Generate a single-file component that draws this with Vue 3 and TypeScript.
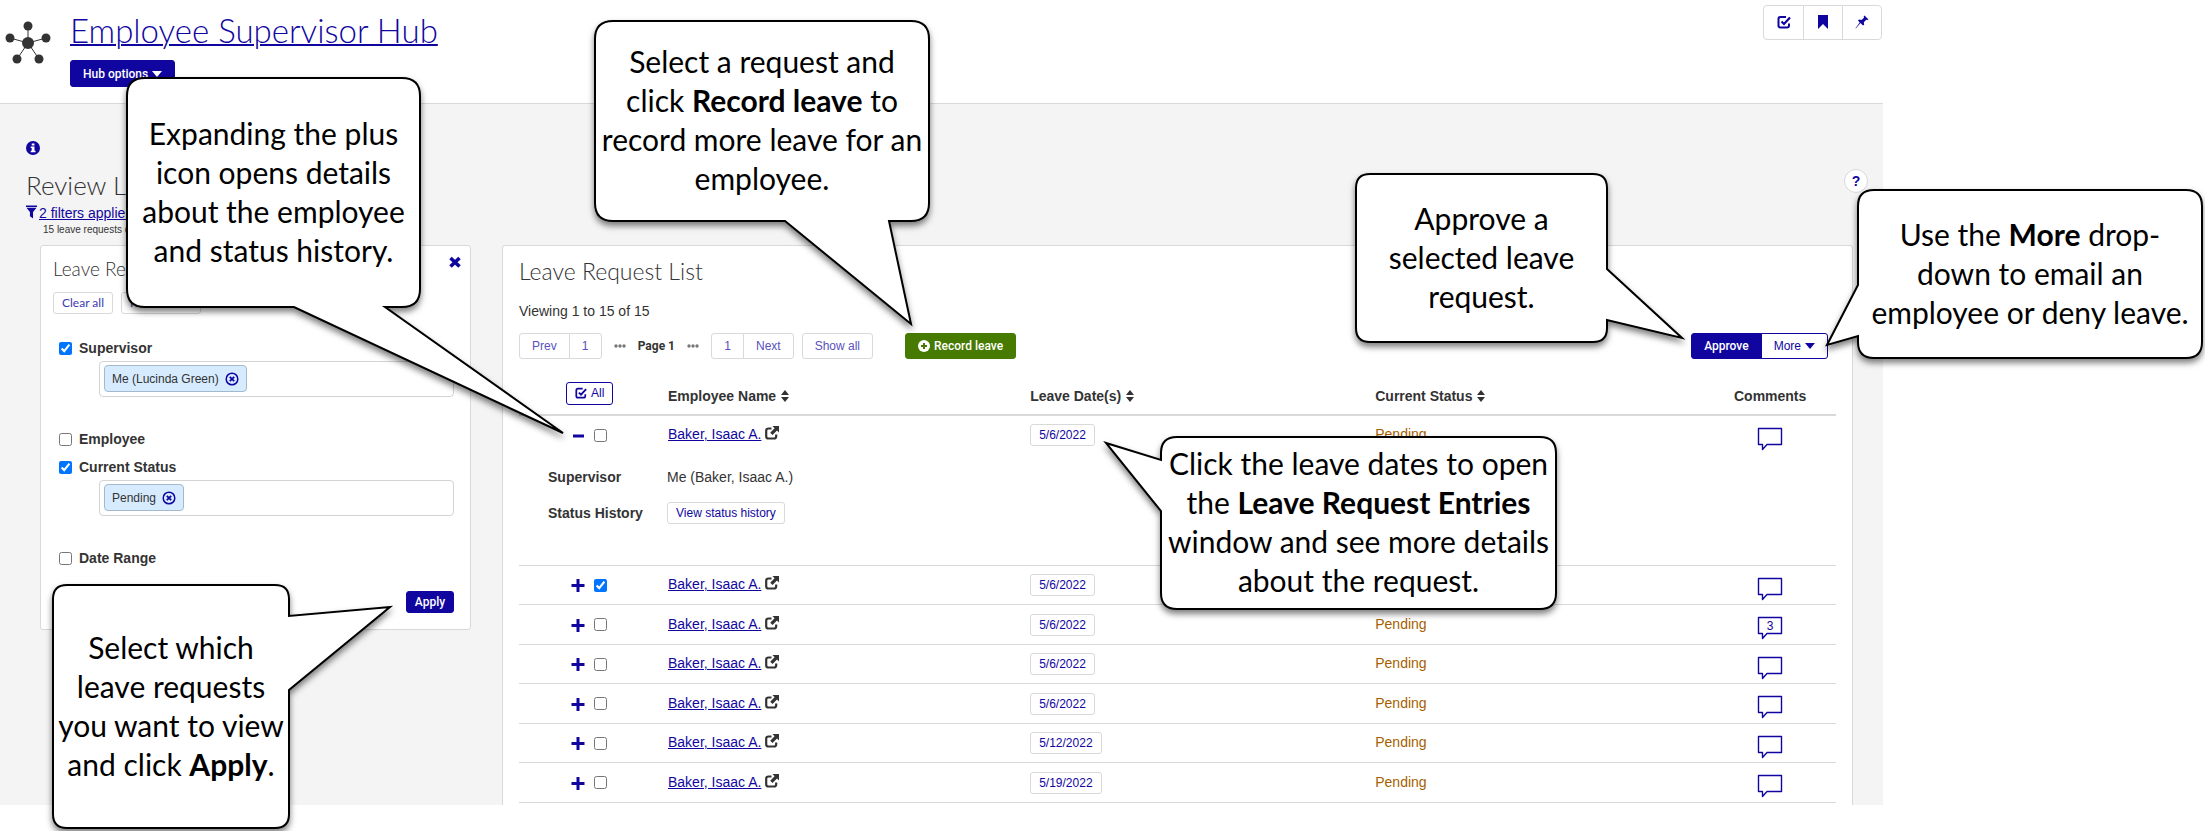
<script setup lang="ts">
import { ref } from 'vue'

interface LeaveRequest {
  id: number
  name: string
  date: string
  status: string
  comments: string
  selected: boolean
  expanded: boolean
}

interface Segment {
  text: string
  bold?: boolean
}

interface Point {
  x: number
  y: number
}

interface Callout {
  id: string
  left: number
  top: number
  width: number
  height: number
  radius: number
  side: 'bottom' | 'left' | 'right'
  from: number
  to: number
  tip: Point
  lines: Segment[][]
}

const dates = ['5/6/2022', '5/6/2022', '5/6/2022', '5/6/2022', '5/6/2022', '5/12/2022', '5/19/2022']

const requests = ref<LeaveRequest[]>(
  dates.map((date, i) => ({
    id: i,
    name: 'Baker, Isaac A.',
    date,
    status: 'Pending',
    comments: i === 2 ? '3' : '',
    selected: i === 1,
    expanded: i === 0,
  })),
)

const supervisorOn = ref(true)
const employeeOn = ref(false)
const statusOn = ref(true)
const dateRangeOn = ref(false)

const columns = ['Employee Name', 'Leave Date(s)', 'Current Status']

// Tail anchors and tips are relative to the callout box's own top left corner.
const callouts: Callout[] = [
  {
    id: 'expand', left: 127, top: 78, width: 293, height: 229, radius: 18,
    side: 'bottom', from: 167, to: 258, tip: { x: 436, y: 355 },
    lines: [
      [{ text: 'Expanding the plus' }],
      [{ text: 'icon opens details' }],
      [{ text: 'about the employee' }],
      [{ text: 'and status history.' }],
    ],
  },
  {
    id: 'record', left: 595, top: 21, width: 334, height: 200, radius: 18,
    side: 'bottom', from: 190, to: 294, tip: { x: 316, y: 303 },
    lines: [
      [{ text: 'Select a request and' }],
      [{ text: 'click ' }, { text: 'Record leave', bold: true }, { text: ' to' }],
      [{ text: 'record more leave for an' }],
      [{ text: 'employee.' }],
    ],
  },
  {
    id: 'approve', left: 1356, top: 174, width: 251, height: 168, radius: 14,
    side: 'right', from: 95, to: 146, tip: { x: 326, y: 164 },
    lines: [
      [{ text: 'Approve a' }],
      [{ text: 'selected leave' }],
      [{ text: 'request.' }],
    ],
  },
  {
    id: 'more', left: 1858, top: 190, width: 344, height: 168, radius: 16,
    side: 'left', from: 95, to: 146, tip: { x: -31, y: 155 },
    lines: [
      [{ text: 'Use the ' }, { text: 'More', bold: true }, { text: ' drop-' }],
      [{ text: 'down to email an' }],
      [{ text: 'employee or deny leave.' }],
    ],
  },
  {
    id: 'dates', left: 1161, top: 437, width: 395, height: 172, radius: 16,
    side: 'left', from: 23, to: 74, tip: { x: -55, y: 6 },
    lines: [
      [{ text: 'Click the leave dates to open' }],
      [{ text: 'the ' }, { text: 'Leave Request Entries', bold: true }],
      [{ text: 'window and see more details' }],
      [{ text: 'about the request.' }],
    ],
  },
  {
    id: 'apply', left: 53, top: 585, width: 236, height: 243, radius: 14,
    side: 'right', from: 31, to: 105, tip: { x: 337, y: 22 },
    lines: [
      [{ text: 'Select which' }],
      [{ text: 'leave requests' }],
      [{ text: 'you want to view' }],
      [{ text: 'and click ' }, { text: 'Apply', bold: true }, { text: '.' }],
    ],
  },
]

function outline(c: Callout): string {
  const { width: w, height: h, radius: r, tip } = c
  const right = c.side === 'right' ? `V${c.from} L${tip.x} ${tip.y} L${w} ${c.to}` : ''
  const bottom = c.side === 'bottom' ? `H${c.to} L${tip.x} ${tip.y} L${c.from} ${h}` : ''
  const left = c.side === 'left' ? `V${c.to} L${tip.x} ${tip.y} L0 ${c.from}` : ''
  return [
    `M${r} 0 H${w - r} Q${w} 0 ${w} ${r}`, right,
    `V${h - r} Q${w} ${h} ${w - r} ${h}`, bottom,
    `H${r} Q0 ${h} 0 ${h - r}`, left,
    `V${r} Q0 0 ${r} 0 Z`,
  ].join(' ')
}

function box(c: Callout) {
  return { left: `${c.left}px`, top: `${c.top}px`, width: `${c.width}px`, height: `${c.height}px` }
}
</script>

<template>
  <div class="screen">
    <div class="page">
      <header class="hub-header">
        <svg class="hub-logo" viewBox="0 0 46 44" aria-hidden="true">
          <path d="M23 22V5M23 22L5 17M23 22l18-5M23 22L12 38M23 22l11 16" stroke="#333" />
          <g fill="#333">
            <circle cx="23" cy="22" r="6" />
            <circle cx="23" cy="5" r="4.5" />
            <circle cx="5" cy="17" r="4.5" />
            <circle cx="41" cy="17" r="4.5" />
            <circle cx="12" cy="38" r="4.5" />
            <circle cx="34" cy="38" r="4.5" />
          </g>
        </svg>
        <div class="hub-main">
          <h1><a href="#hub">Employee Supervisor Hub</a></h1>
          <button type="button" class="btn solid hub-options">
            Hub options
            <svg class="caret" viewBox="0 0 10 6"><path d="M0 0h10L5 6z" /></svg>
          </button>
        </div>
        <div class="tools">
          <button type="button" aria-label="Tasks">
            <svg viewBox="0 0 14 14">
              <path d="M9 2H3.500Q1.500 2 1.500 4v6.500q0 2 2 2H10q2 0 2-2V8.500" fill="none" stroke="currentColor" stroke-width="2" />
              <path d="M4.500 6.500L7 9l6-6.500" fill="none" stroke="currentColor" stroke-width="2.200" />
            </svg>
          </button>
          <button type="button" aria-label="Bookmark">
            <svg viewBox="0 0 14 14"><path d="M2 0h10v14L7 9l-5 5z" fill="currentColor" /></svg>
          </button>
          <button type="button" aria-label="Pin">
            <svg viewBox="0 0 14 14">
              <path d="M9.500 0.500l4 4-1.200.6-1-.3-2.500 2.500.4 2.500-1.200.8-2.500-2.600L.8 13.400l-.3-.2L4.700 7.500 3 5.600l1-1 2.500.3L9 2.700 8.700 1.500z" fill="currentColor" />
            </svg>
          </button>
        </div>
      </header>

      <main class="workspace">
        <div class="info-row">
          <svg class="info" viewBox="0 0 14 14" aria-hidden="true">
            <circle cx="7" cy="7" r="7" fill="#10069f" />
            <path d="M5.700 2.500h2.800v2H5.700zM4.700 5.500h3.800v4.200h1v1.600H4.700V9.700h1V7.100h-1z" fill="#fff" />
          </svg>
          <button type="button" class="help" aria-label="Help">?</button>
        </div>
        <h2>Review Leave</h2>
        <p class="filters-line">
          <svg class="funnel" viewBox="0 0 12 14" aria-hidden="true">
            <path d="M0 0h12v1.600H0zM0.500 2.400h11L7.700 7v7L4.300 11.500V7z" fill="#10069f" />
          </svg>
          <a href="#filters">2 filters applied</a>
        </p>
        <p class="count">15 leave requests displayed</p>

        <div class="columns">
          <section class="panel filter">
            <div class="filter-head">
              <h3>Leave Request Filter</h3>
              <button type="button" class="close" aria-label="Close">
                <svg viewBox="0 0 12 12"><path d="M1.500 2l9 8.500M10.500 2l-9 8.500" stroke="currentColor" stroke-width="3.600" /></svg>
              </button>
            </div>
            <div class="filter-actions">
              <button type="button" class="btn light">Clear all</button>
              <button type="button" class="btn light">Reset filters</button>
            </div>
            <label class="check"><input v-model="supervisorOn" type="checkbox">Supervisor</label>
            <div class="tokens">
              <span class="token">Me (Lucinda Green)
                <button type="button" aria-label="Remove supervisor">
                  <svg viewBox="0 0 14 14"><circle cx="7" cy="7" r="5.800" fill="none" stroke="currentColor" stroke-width="1.500" /><path d="M4.800 4.800l4.400 4.400M9.200 4.800L4.800 9.200" stroke="currentColor" stroke-width="1.800" /></svg>
                </button>
              </span>
            </div>
            <label class="check"><input v-model="employeeOn" type="checkbox">Employee</label>
            <label class="check second"><input v-model="statusOn" type="checkbox">Current Status</label>
            <div class="tokens">
              <span class="token">Pending
                <button type="button" aria-label="Remove status">
                  <svg viewBox="0 0 14 14"><circle cx="7" cy="7" r="5.800" fill="none" stroke="currentColor" stroke-width="1.500" /><path d="M4.800 4.800l4.400 4.400M9.200 4.800L4.800 9.200" stroke="currentColor" stroke-width="1.800" /></svg>
                </button>
              </span>
            </div>
            <label class="check"><input v-model="dateRangeOn" type="checkbox">Date Range</label>
            <div class="apply-row"><button type="button" class="btn solid small">Apply</button></div>
          </section>

          <section class="panel list">
            <h3>Leave Request List</h3>
            <p class="viewing">Viewing 1 to 15 of 15</p>
            <div class="toolbar">
              <div class="group">
                <button type="button" class="btn pale">Prev</button>
                <button type="button" class="btn pale num">1</button>
              </div>
              <svg class="dots" viewBox="0 0 12 4"><circle cx="2" cy="2" r="1.700" /><circle cx="6" cy="2" r="1.700" /><circle cx="10" cy="2" r="1.700" /></svg>
              <strong class="current">Page 1</strong>
              <svg class="dots" viewBox="0 0 12 4"><circle cx="2" cy="2" r="1.700" /><circle cx="6" cy="2" r="1.700" /><circle cx="10" cy="2" r="1.700" /></svg>
              <div class="group">
                <button type="button" class="btn pale num">1</button>
                <button type="button" class="btn pale">Next</button>
              </div>
              <button type="button" class="btn pale show-all">Show all</button>
              <button type="button" class="btn green">
                <svg class="plus-circle" viewBox="0 0 12 12"><circle cx="6" cy="6" r="6" fill="#fff" /><path d="M6 3v6M3 6h6" stroke="#467a00" stroke-width="2" /></svg>
                Record leave
              </button>
              <div class="group actions">
                <button type="button" class="btn solid">Approve</button>
                <button type="button" class="btn outline">
                  More
                  <svg class="caret" viewBox="0 0 10 6"><path d="M0 0h10L5 6z" /></svg>
                </button>
              </div>
            </div>

            <table>
              <colgroup>
                <col class="c-select"><col class="c-name"><col class="c-date"><col class="c-status"><col class="c-comments">
              </colgroup>
              <thead>
                <tr>
                  <th class="select">
                    <button type="button" class="btn outline all">
                      <svg viewBox="0 0 14 14">
                        <path d="M9 2H3.500Q1.500 2 1.500 4v6.500q0 2 2 2H10q2 0 2-2V8.500" fill="none" stroke="currentColor" stroke-width="2" />
                        <path d="M4.500 6.500L7 9l6-6.500" fill="none" stroke="currentColor" stroke-width="2.200" />
                      </svg>
                      All
                    </button>
                  </th>
                  <th v-for="column in columns" :key="column">
                    {{ column }}
                    <svg class="sort" viewBox="0 0 8 12"><path d="M0 5l4-5 4 5zM0 7h8l-4 5z" /></svg>
                  </th>
                  <th class="center">Comments</th>
                </tr>
              </thead>
              <tbody>
                <template v-for="request in requests" :key="request.id">
                  <tr :class="{ open: request.expanded }">
                    <td class="select">
                      <button type="button" class="toggle" :aria-label="request.expanded ? 'Collapse' : 'Expand'" @click="request.expanded = !request.expanded">
                        <svg viewBox="0 0 14 14">
                          <path v-if="request.expanded" d="M2 8h11" stroke="currentColor" stroke-width="3" />
                          <path v-else d="M7 1v13M0.500 7.500h13" stroke="currentColor" stroke-width="3" />
                        </svg>
                      </button>
                      <input v-model="request.selected" type="checkbox" :aria-label="`Select ${request.name} ${request.date}`">
                    </td>
                    <td class="name">
                      <a href="#employee">{{ request.name }}</a>
                      <svg class="external" viewBox="0 0 14 14">
                        <path d="M6.500 2.500H3.500Q1.200 2.500 1.200 4.800v5.400q0 2.300 2.300 2.300h5.400q2.300 0 2.300-2.300V8.500" fill="none" stroke="#333" stroke-width="2.200" />
                        <path d="M7.500 0H14v6.500l-2-2-4.500 4.500-2.300-2.300L9.600 2.200z" fill="#333" />
                      </svg>
                    </td>
                    <td><button type="button" class="btn plain">{{ request.date }}</button></td>
                    <td class="status">{{ request.status }}</td>
                    <td class="center">
                      <button type="button" class="comment" aria-label="Comments">
                        <svg viewBox="0 0 26 24"><path d="M1.500 1.500h23v16H10l-4.500 5v-5h-4z" fill="none" stroke="currentColor" stroke-width="1.400" stroke-linejoin="round" /></svg>
                        <span>{{ request.comments }}</span>
                      </button>
                    </td>
                  </tr>
                  <tr v-if="request.expanded" class="details">
                    <td colspan="5">
                      <dl>
                        <dt>Supervisor</dt><dd>Me (Baker, Isaac A.)</dd>
                        <dt>Status History</dt><dd><button type="button" class="btn plain">View status history</button></dd>
                      </dl>
                    </td>
                  </tr>
                </template>
              </tbody>
            </table>
          </section>
        </div>
      </main>
    </div>

    <aside v-for="c in callouts" :key="c.id" class="callout" :style="box(c)">
      <svg class="bubble" aria-hidden="true"><path :d="outline(c)" /></svg>
      <p>
        <span v-for="(line, i) in c.lines" :key="i" class="line">
          <template v-for="(part, j) in line" :key="j"><b v-if="part.bold">{{ part.text }}</b><template v-else>{{ part.text }}</template></template>
        </span>
      </p>
    </aside>
  </div>
</template>

<style>
body {
  margin: 0;
  background: #fff;
}
</style>

<style scoped>
* {
  box-sizing: border-box;
}
.screen {
  position: relative;
  overflow: hidden;
  padding-bottom: 26px;
  font: 14px/20px "Liberation Sans", Arial, sans-serif;
  color: #333;
}
.page {
  margin-right: 322px;
}
h1, h2, h3, p, dl, dd {
  margin: 0;
}
h1, h2, h3 {
  font-family: Lato, sans-serif;
  font-weight: 300;
}
a {
  color: #10069f;
}
svg {
  display: block;
  flex: none;
}
button {
  font: inherit;
  cursor: pointer;
}
input[type="checkbox"] {
  width: 13px;
  height: 13px;
  margin: 0;
  accent-color: #0075ff;
}
.hub-header {
  display: flex;
  align-items: flex-start;
  height: 104px;
  border-bottom: 1px solid #d9d9d9;
}
.hub-logo {
  width: 46px;
  height: 44px;
  margin: 21px 19px 0 5px;
}
.hub-main {
  flex: 1;
  padding-top: 10px;
}
h1 {
  font-size: 33px;
  line-height: 40px;
}
h1 a {
  text-decoration-thickness: 2px;
}
.btn {
  display: inline-flex;
  align-items: center;
  justify-content: center;
  gap: 4px;
  height: 26px;
  padding: 0 12px;
  border: 1px solid #d9d9d9;
  border-radius: 3px;
  background: #fff;
  color: #10069f;
  font-size: 12px;
  line-height: 16px;
  white-space: nowrap;
}
.btn.solid, .btn.green {
  padding: 0 12px;
  border-color: #10069f;
  background: #10069f;
  color: #fff;
  font-family: Roboto, "Liberation Sans", sans-serif;
  font-weight: 500;
}
.btn.green {
  margin-left: 32px;
  border-color: #467a00;
  background: #467a00;
}
.btn.outline {
  border-color: #10069f;
}
.btn.pale {
  color: #5951bd;
}
.btn.small, .btn.plain, .btn.light {
  height: 22px;
  padding: 0 8px;
}
.btn.light {
  color: #4038b2;
  font-family: Lato, sans-serif;
}
.btn.hub-options {
  height: 27px;
  margin-top: 10px;
}
.caret {
  width: 10px;
  height: 6px;
  fill: currentColor;
}
.tools {
  display: flex;
  margin: 5px 1px 0 0;
  border: 1px solid #d9d9d9;
  border-radius: 4px;
}
.tools button {
  display: grid;
  place-items: center;
  width: 39px;
  height: 33px;
  padding: 0 0 2px;
  border: 0;
  background: none;
  color: #10069f;
}
.tools button + button {
  border-left: 1px solid #d9d9d9;
}
.tools svg {
  width: 14px;
  height: 14px;
}
.workspace {
  padding: 37px 30px 0 26px;
  background: #f4f4f4;
}
.info-row {
  display: flex;
  justify-content: space-between;
  height: 29px;
}
.info {
  width: 14px;
  height: 14px;
}
.help {
  width: 24px;
  height: 24px;
  margin: 28px -15px 0 0;
  padding: 0;
  border: 1px solid #d9d9d9;
  border-radius: 50%;
  background: #fff;
  color: #10069f;
  font-weight: 700;
}
h2 {
  font-size: 26px;
  line-height: 30px;
}
.filters-line {
  display: flex;
  align-items: center;
  gap: 2px;
  height: 22px;
  padding-top: 2px;
}
.filters-line a {
  padding-top: 2px;
}
.funnel {
  width: 11px;
  height: 14px;
}
.count {
  padding: 2px 0 0 17px;
  font-size: 10px;
  line-height: 12px;
}
.columns {
  display: flex;
  align-items: flex-start;
  gap: 31px;
  padding: 9px 0 0 14px;
}
.panel {
  border: 1px solid #d9d9d9;
  border-radius: 3px;
  background: #fff;
}
.filter {
  flex: none;
  width: 431px;
  padding: 12px 16px 16px 12px;
}
.filter-head {
  display: flex;
  justify-content: space-between;
}
.filter h3 {
  font-size: 19px;
  line-height: 22px;
}
.close {
  width: 12px;
  height: 12px;
  margin: -2px -7px 0 0;
  padding: 0;
  border: 0;
  background: none;
  color: #10069f;
}
.filter-actions {
  display: flex;
  gap: 8px;
  padding: 12px 0 26px;
}
.check {
  display: flex;
  align-items: center;
  gap: 7px;
  height: 16px;
  margin-left: 6px;
  font-weight: 700;
}
.check.second {
  margin-top: 12px;
}
.tokens {
  height: 36px;
  margin: 5px 0 34px 46px;
  padding: 3px 4px;
  border: 1px solid #d3d3d3;
  border-radius: 4px;
}
.token {
  display: inline-flex;
  align-items: center;
  gap: 6px;
  height: 27px;
  padding: 0 7px;
  border: 1px solid #a3bace;
  border-radius: 4px;
  background: #d7ebff;
  font-size: 12px;
}
.token button {
  padding: 0;
  border: 0;
  background: none;
  color: #10069f;
}
.token svg {
  width: 14px;
  height: 14px;
}
.apply-row {
  display: flex;
  justify-content: flex-end;
  padding-top: 25px;
}
.apply-row .btn {
  width: 48px;
}
.list {
  flex: 1;
  padding: 11px 16px 2px;
  border-bottom: 0;
  border-radius: 3px 3px 0 0;
}
.list h3 {
  font-size: 23px;
  line-height: 28px;
}
.viewing {
  padding: 16px 0 12px;
}
.toolbar {
  display: flex;
  align-items: center;
  height: 26px;
}
.group {
  display: flex;
}
.group .btn:first-child {
  border-radius: 3px 0 0 3px;
}
.group .btn:last-child {
  margin-left: -1px;
  border-radius: 0 3px 3px 0;
}
.num {
  width: 33px;
}
.dots {
  width: 12px;
  height: 4px;
  margin: 0 12px;
  fill: #777;
}
.current {
  font: 700 12px/16px Roboto, "Liberation Sans", sans-serif;
}
.show-all {
  margin-left: 8px;
}
.plus-circle {
  width: 12px;
  height: 12px;
}
.actions {
  margin: 0 8px 0 auto;
}
table {
  width: 100%;
  margin-top: 17px;
  border-spacing: 0;
  table-layout: fixed;
}
.c-select { width: 141px; }
.c-name { width: 27.5%; }
.c-date { width: 26.2%; }
.c-comments { width: 10%; }
th, td {
  height: 40px;
  padding: 0 8px;
  border-bottom: 1px solid #d9d9d9;
  text-align: left;
}
tr:nth-child(odd) td {
  height: 39px;
}
th {
  border-bottom: 2px solid #d9d9d9;
  padding-top: 1px;
}
.sort {
  display: inline-block;
  width: 8px;
  height: 12px;
  margin-left: 1px;
  vertical-align: -1px;
  fill: #333;
}
.center {
  text-align: center;
}
.select {
  padding: 0 0 2px 47px;
}
th.select {
  padding-bottom: 4px;
}
td.name, td.status {
  padding-bottom: 2px;
}
.all {
  height: 23px;
  padding: 0 8px;
  font-weight: 400;
}
.all svg {
  width: 12px;
  height: 12px;
}
.toggle {
  display: inline-block;
  width: 14px;
  height: 14px;
  margin: 0 9px 0 5px;
  padding: 0;
  border: 0;
  background: none;
  color: #10069f;
  vertical-align: middle;
}
td.select input {
  vertical-align: middle;
}
.external {
  display: inline-block;
  width: 14px;
  height: 14px;
  margin-left: 4px;
  vertical-align: -1px;
}
td .btn {
  vertical-align: middle;
}
.status {
  color: #a65f00;
}
.comment {
  position: relative;
  width: 26px;
  height: 24px;
  margin-top: 7px;
  padding: 0;
  border: 0;
  background: none;
  color: #10069f;
  vertical-align: middle;
}
.comment svg {
  width: 26px;
  height: 24px;
}
.comment span {
  position: absolute;
  inset: 2px 0 auto;
  font-size: 12px;
  line-height: 16px;
}
tr.open td {
  height: 38px;
  border-bottom: 0;
}
tr.details td {
  height: 112px;
  padding: 13px 0 0 29px;
  vertical-align: top;
}
dl {
  display: grid;
  grid-template-columns: 119px 1fr;
  row-gap: 15px;
  align-items: center;
}
dt {
  font-weight: 700;
}
.callout {
  position: absolute;
  display: grid;
  place-items: center;
}
.bubble {
  position: absolute;
  inset: 0;
  width: 100%;
  height: 100%;
  overflow: visible;
  filter: drop-shadow(0 4px 3px rgba(0, 0, 0, 0.5));
}
.bubble path {
  fill: #fff;
  stroke: #000;
  stroke-width: 2px;
}
.callout p {
  position: relative;
  padding-bottom: 2px;
  color: #000;
  font: 30px/39px Lato, sans-serif;
  text-align: center;
}
.line {
  display: block;
  white-space: nowrap;
}
</style>
